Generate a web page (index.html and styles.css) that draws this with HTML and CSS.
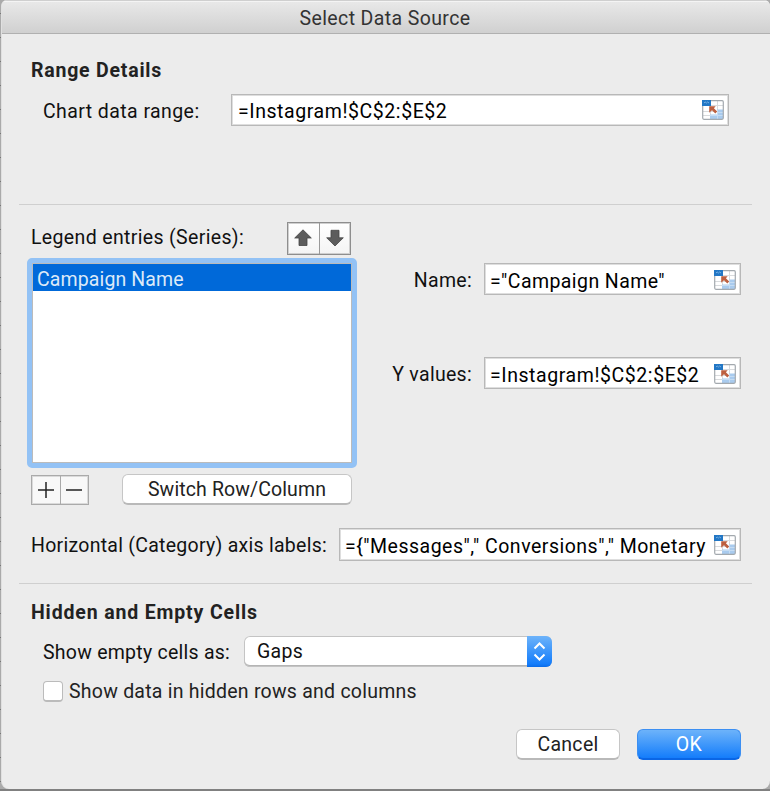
FILE: index.html
```html
<!DOCTYPE html>
<html lang="en">
<head>
<meta charset="utf-8">
<title>Select Data Source</title>
<link rel="stylesheet" href="styles.css">
</head>
<body>
<svg class="symbols" width="0" height="0" aria-hidden="true">
  <symbol id="range" viewBox="0 0 22 20">
    <rect x="1" y="1" width="20" height="18" rx="1" fill="#fff"/>
    <path d="M1 11.500h20M1 15.500h20M15.500 1v18M9 5.500h12M8.500 1v18" stroke="#d9dbdd" fill="none"/>
    <path d="M15 9.500h6V19H8v-4.500h7z" fill="#a9cbee"/>
    <path d="M15.500 10v9M8 15.500h13M15 12.500h6" stroke="#c5dcf3" fill="none"/>
    <rect x=".7" y=".7" width="20.600" height="18.600" rx="1.200" fill="none" stroke="#a3a9ae" stroke-width="1.200"/>
    <path d="M0 0h9v6H0z" fill="#2277c5"/>
    <path d="M2 3l1.200-1 1.200 1 1.200-1L7 3" stroke="#78b0e2" fill="none"/>
    <path d="M7.200 6.200h6.500l-1.800 2 3.300 3.300-1.900 2-3.300-3.300-2.800 2.500z" fill="#bd6040"/>
  </symbol>
</svg>
<main class="dialog">
  <header class="titlebar"><span class="t-title">Select Data Source</span></header>

  <section class="range">
    <h2 class="t-range">Range Details</h2>
    <div class="row range-row">
      <label class="t-chart">Chart data range:</label>
      <div class="field"><span class="t-formula">=Instagram!$C$2:$E$2</span><svg class="picker"><use href="#range"/></svg></div>
    </div>
  </section>

  <section class="series">
    <div class="left">
      <div class="legend">
        <label class="t-legend">Legend entries (Series):</label>
        <div class="arrows">
          <button><svg width="18" height="18" viewBox="0 0 18 18"><path d="M9 .8L17.300 9H13v7.500H5V9H.7z" fill="#5c5c5c" stroke="#444" stroke-width=".8"/></svg></button>
          <button><svg width="18" height="18" viewBox="0 0 18 18"><path d="M9 17L.7 8.800H5V1.300h8v7.500h4.300z" fill="#5c5c5c" stroke="#444" stroke-width=".8"/></svg></button>
        </div>
      </div>
      <div class="list"><div class="item"><span class="t-item">Campaign Name</span></div></div>
      <div class="actions">
        <div class="plusminus">
          <button><svg width="18" height="18"><path d="M1 9h16M9 1v16" stroke="#222" stroke-width="1.500"/></svg></button>
          <button><svg width="18" height="18"><path d="M1 9h16" stroke="#222" stroke-width="1.500"/></svg></button>
        </div>
        <button class="push switch"><span class="t-switch">Switch Row/Column</span></button>
      </div>
    </div>
    <div class="right">
      <div class="row"><label class="t-name">Name:</label>
        <div class="field"><span class="t-campaign">="Campaign Name"</span><svg class="picker"><use href="#range"/></svg></div></div>
      <div class="row"><label class="t-yval">Y values:</label>
        <div class="field"><span class="t-formula">=Instagram!$C$2:$E$2</span><svg class="picker"><use href="#range"/></svg></div></div>
    </div>
    <div class="row axis">
      <label class="t-axis">Horizontal (Category) axis labels:</label>
      <div class="field"><span class="t-messages">={"Messages"," Conversions"," Monetary</span><svg class="picker"><use href="#range"/></svg></div>
    </div>
  </section>

  <section class="hidden-cells">
    <h2 class="t-hidden">Hidden and Empty Cells</h2>
    <div class="row empty-row">
      <label class="t-show">Show empty cells as:</label>
      <div class="select"><span class="t-gaps">Gaps</span>
        <div class="stepper"><svg width="25" height="31"><path d="M7.500 12.500l5-5 5 5M7.500 18.500l5 5 5-5" fill="none" stroke="#fff" stroke-width="2"/></svg></div>
      </div>
    </div>
    <div class="row check-row"><span class="checkbox"></span><label class="t-check">Show data in hidden rows and columns</label></div>
  </section>

  <footer class="buttons">
    <button class="push"><span class="t-cancel">Cancel</span></button>
    <button class="push primary"><span class="t-ok">OK</span></button>
  </footer>
</main>
</body>
</html>
```
FILE: styles.css
```css
* { box-sizing: border-box; }
body {
  margin: 0;
  width: 770px;
  height: 791px;
  overflow: hidden;
  padding: 0 0 2px 1px;
  background:
    linear-gradient(#808080, #808080) 0 100% / 100% 2px no-repeat,
    repeating-linear-gradient(#aaa 0 13px, #777 13px 14px, #aaa 14px 24px);
  font: 19.500px/24px Roboto, "Liberation Sans", sans-serif;
  color: #111;
}
.symbols { position: absolute; }
button { font: inherit; color: inherit; padding: 0; margin: 0; }
label, span { white-space: nowrap; }
h2 { margin: 0; font-size: 19.500px; line-height: 24px; font-weight: 700; color: #222; white-space: nowrap; }
.dialog {
  height: 789px;
  background: #ececec;
  border-radius: 6px 6px 8px 8px;
  border-left: 1px solid #e0e0e0;
  overflow: hidden;
}
.titlebar {
  height: 34px;
  display: flex;
  justify-content: center;
  align-items: center;
  padding: 5px 2px 0 0;
  background: linear-gradient(#cfcfcf 0 1px, #f4f4f4 1px 2px, #e8e8e8 2px, #d0d0d0);
  border-bottom: 1px solid #b0b0b0;
  color: #333;
}
.row { display: flex; align-items: center; }
.row label { padding-top: 3px; }
.field {
  height: 32px;
  display: flex;
  align-items: center;
  justify-content: space-between;
  padding: 4px 4px 0 5px;
  background: #fff;
  border: 1px solid #b8b8b8;
  box-shadow: inset 0 0 0 1px #dedede;
  color: #000;
}
.picker { width: 22px; height: 20px; flex: none; margin-top: -4px; }

.range { margin: 0 18px 0 17px; height: 171px; padding: 25px 0 0 12px; border-bottom: 1px solid #cfcfcf; }
.range-row { margin-top: 11px; padding-left: 12px; }
.range-row label { width: 188px; padding-top: 3px; }
.range-row .field { width: 498px; padding-left: 6px; }

.series {
  margin: 0 18px 0 17px;
  height: 379px;
  padding-top: 17px;
  border-bottom: 1px solid #cfcfcf;
  display: grid;
  grid-template: 284px 1fr / 338px 1fr;
}
.left { padding-left: 8px; }
.legend { display: flex; justify-content: space-between; width: 324px; height: 33px; padding-left: 4px; }
.legend label { padding-top: 4px; }
.arrows { display: flex; width: 64px; height: 33px; border: 1px solid #8e8e8e; box-shadow: inset 0 0 0 1px #cfcfcf; background: linear-gradient(#fff, #f4f4f4); }
.arrows button { flex: 1; border: 0; background: none; display: flex; align-items: center; justify-content: center; padding-bottom: 1px; }
.arrows button + button { border-left: 1px solid #999; }
.list { margin-top: 3px; width: 330px; height: 210px; border: 5px solid #93c2f5; border-radius: 5px; background: #fff; box-shadow: inset 0 0 0 1px #bbb; padding: 1px; }
.item { height: 27px; background: #0069d9; color: #dce9f8; padding: 4px 0 0 4px; }
.actions { display: flex; margin-top: 6px; padding-left: 4px; }
.plusminus { display: flex; width: 58px; height: 30px; margin-top: 1px; border: 1px solid #aaa; box-shadow: inset 0 0 0 1px #dadada; background: #f8f8f8; }
.plusminus button { flex: 1; border: 0; background: none; display: flex; align-items: center; justify-content: center; }
.plusminus button + button { border-left: 1px solid #aaa; }
.push {
  width: 104px;
  height: 31px;
  display: flex;
  align-items: center;
  justify-content: center;
  padding-top: 2px;
  border: 1px solid #c6c6c6;
  border-bottom: 2px solid #b9b9b9;
  border-radius: 6px;
  background: #fff;
  color: #222;
}
.switch { width: 230px; margin-left: 33px; }
.right { padding-top: 41px; }
.right .row { height: 32px; margin-bottom: 62px; padding-right: 11px; }
.right label { flex: 1; text-align: right; padding-right: 12px; }
.right .field { width: 257px; padding-top: 5px; }
.axis { grid-column: 1 / -1; height: 33px; margin-top: 22px; padding-left: 12px; }
.axis label { width: 308px; }
.axis .field { width: 402px; height: 33px; padding-top: 5px; }

.hidden-cells { padding: 17px 0 0 29px; }
.empty-row { margin-top: 11px; padding-left: 12px; height: 31px; }
.empty-row label { width: 201px; }
.select {
  width: 308px;
  height: 31px;
  display: flex;
  justify-content: space-between;
  align-items: center;
  background: #fff;
  border-radius: 6px;
  box-shadow: inset 0 0 0 1px #c4c4c4, inset 0 -2px 0 #b5b5b5;
  padding-left: 13px;
}
.stepper { width: 25px; height: 31px; border-radius: 0 6px 6px 0; background: linear-gradient(#6db3fa, #147dfb 90%, #0a6be8); }
.stepper svg { display: block; }
.check-row { height: 26px; margin-top: 11px; padding-left: 12px; color: #222; }
.checkbox { width: 20px; height: 21px; background: #fff; border: 1px solid #bbb; border-bottom-width: 2px; border-radius: 4px; margin-right: 6px; }
.check-row label { padding-top: 2px; }
.buttons { display: flex; justify-content: flex-end; gap: 17px; margin-top: 25px; padding-right: 29px; }
.primary { border: 1px solid #3c8ff2; border-bottom: 2px solid #0a66e6; background: linear-gradient(#6db3fa, #147dfb); color: #fff; }

/* Tracking per label */
[class^="t-"] { letter-spacing: .3px; }
.dialog .t-title { letter-spacing: .38px; }
.dialog .t-range { letter-spacing: .78px; }
.dialog .t-hidden { letter-spacing: .85px; }
.dialog .t-chart { letter-spacing: .42px; }
.dialog .t-formula { letter-spacing: .57px; }
.dialog .t-legend { letter-spacing: .35px; }
.dialog .t-item { letter-spacing: .12px; }
.dialog .t-campaign { letter-spacing: .42px; }
.dialog .t-messages { letter-spacing: .5px; }
.dialog .t-axis { letter-spacing: .27px; }
.dialog .t-show { letter-spacing: .25px; }
.dialog .t-check { letter-spacing: .24px; }
.dialog .t-switch { letter-spacing: .12px; }
```
